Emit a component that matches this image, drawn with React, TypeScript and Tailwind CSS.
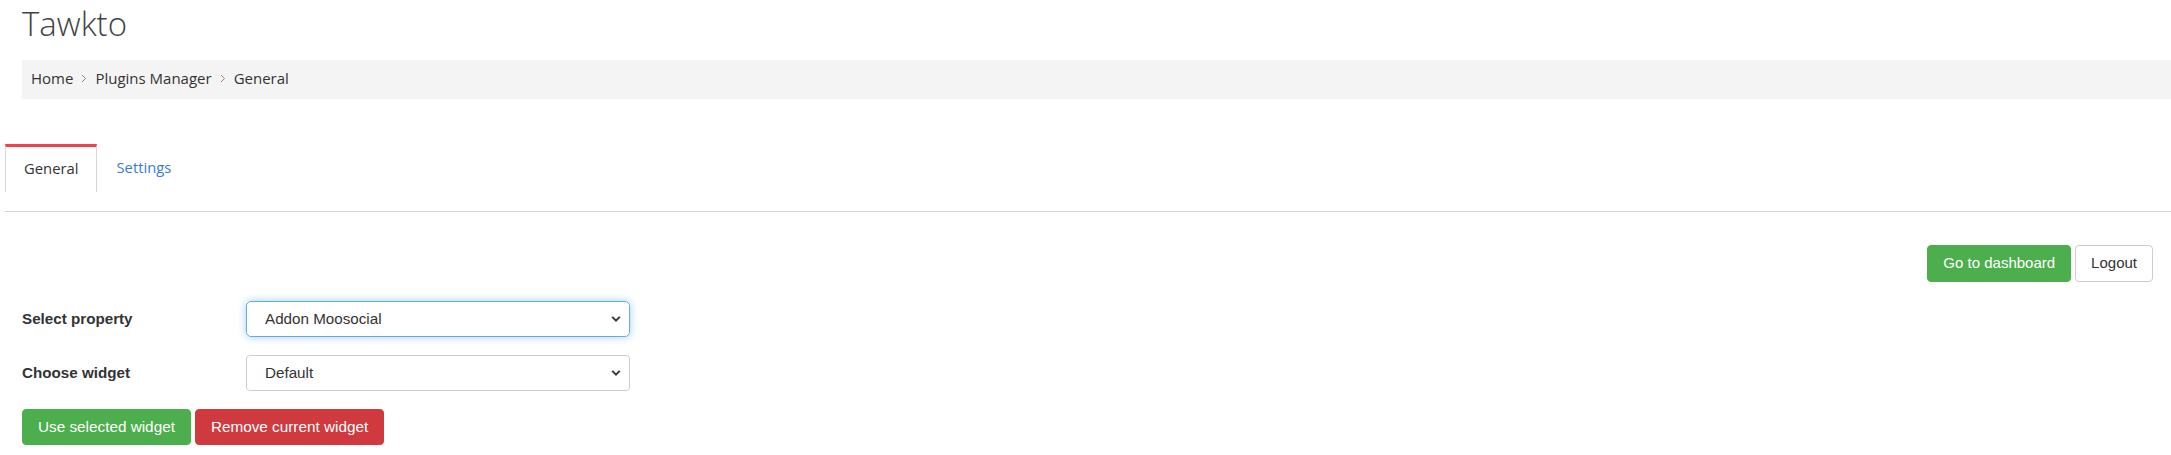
import { useState } from "react";

const sans = `font-["Open_Sans",sans-serif]`
const arial = `font-["Liberation_Sans",Arial,sans-serif]`

function Chevron() {
    return (
        <svg width="10" height="7" viewBox="0 0 10 7" className="pointer-events-none absolute right-[8px] top-1/2 -translate-y-1/2">
            <path d="M1.2 1.4 L5 5.2 L8.8 1.4" fill="none" stroke="#3a3a3a" strokeWidth="2" />
        </svg>
    )
}

function Crumb() {
    return (
        <svg width="6" height="9" viewBox="0 0 6 9" className="mx-[8px]">
            <path d="M1 1 L4.5 4.5 L1 8" fill="none" stroke="#8a8a8a" strokeWidth="1" />
        </svg>
    )
}

export default function App() {
    // Hooks
    const [property, setProperty] = useState<string>("Addon Moosocial")
    const [widget, setWidget] = useState<string>("Default")

    // Constants
    const labelClass = `w-[224px] text-[15.2px] font-bold text-[#333] ${arial}`
    const selectClass = `h-full w-full appearance-none bg-white pl-[18px] pr-8 text-[15.2px] text-[#333] outline-none ${arial}`
    const btnClass = `px-[15px] rounded-[4px] border ${arial}`

    return (
        <div className="min-h-[455px] w-full bg-white pl-[5px]">
            {/* Title */}
            <h1 className={`pl-[17px] text-[33px] leading-[48px] font-light text-[#444] ${sans}`}>Tawkto</h1>

            {/* Breadcrumb */}
            <div className={`mt-[12px] ml-[17px] flex h-[39px] items-center bg-[#f4f4f4] pl-[9px] pb-[2px] text-[15px] text-[#333] ${sans}`}>
                <span>Home</span>
                <Crumb />
                <span>Plugins Manager</span>
                <Crumb />
                <span>General</span>
            </div>

            {/* Tabs */}
            <div className={`mt-[45px] flex text-[14.8px] ${sans}`}>
                <div className="flex h-[48px] items-center border-x border-t-[3px] border-x-[#d6d6d6] border-t-[#f0414b] px-[18px] pb-[2px] text-[#333]">General</div>
                <div className="flex h-[48px] items-center px-[19px] pb-[2px] text-[#3a7bd5]">Settings</div>
            </div>
            <div className="mt-[19px] border-t border-[#d4d4d4]" />

            {/* Dashboard actions */}
            <div className="mt-[33px] flex justify-end gap-[4px] pr-[18px]">
                <button className={`${btnClass} h-[37px] text-[15px] border-[#4cae4c] bg-[#4cae4c] text-white`}>Go to dashboard</button>
                <button className={`${btnClass} h-[37px] text-[15px] border-[#ccc] bg-white text-[#333]`}>Logout</button>
            </div>

            {/* Form */}
            <div className="pl-[17px]">
                <div className="mt-[19px] flex h-[36px] items-center">
                    <label className={labelClass}>Select property</label>
                    <div className="relative h-full w-[384px] rounded-[5px] border border-[#66a9ec] shadow-[0_0_8px_rgba(102,175,233,0.6)]">
                        <select value={property} onChange={e => setProperty(e.target.value)} className={`${selectClass} rounded-[5px]`}>
                            <option>Addon Moosocial</option>
                        </select>
                        <Chevron />
                    </div>
                </div>
                <div className="mt-[18px] flex h-[36px] items-center">
                    <label className={labelClass}>Choose widget</label>
                    <div className="relative h-full w-[384px] rounded-[4px] border border-[#ccc]">
                        <select value={widget} onChange={e => setWidget(e.target.value)} className={`${selectClass} rounded-[4px]`}>
                            <option>Default</option>
                        </select>
                        <Chevron />
                    </div>
                </div>
                <div className="mt-[18px] flex gap-[4px]">
                    <button className={`${btnClass} h-[36px] text-[15.3px] border-[#4cae4c] bg-[#4cae4c] text-white`}>Use selected widget</button>
                    <button className={`${btnClass} h-[36px] text-[15.3px] border-[#d0393e] bg-[#d0393e] text-white`}>Remove current widget</button>
                </div>
            </div>
        </div>
    )
}
